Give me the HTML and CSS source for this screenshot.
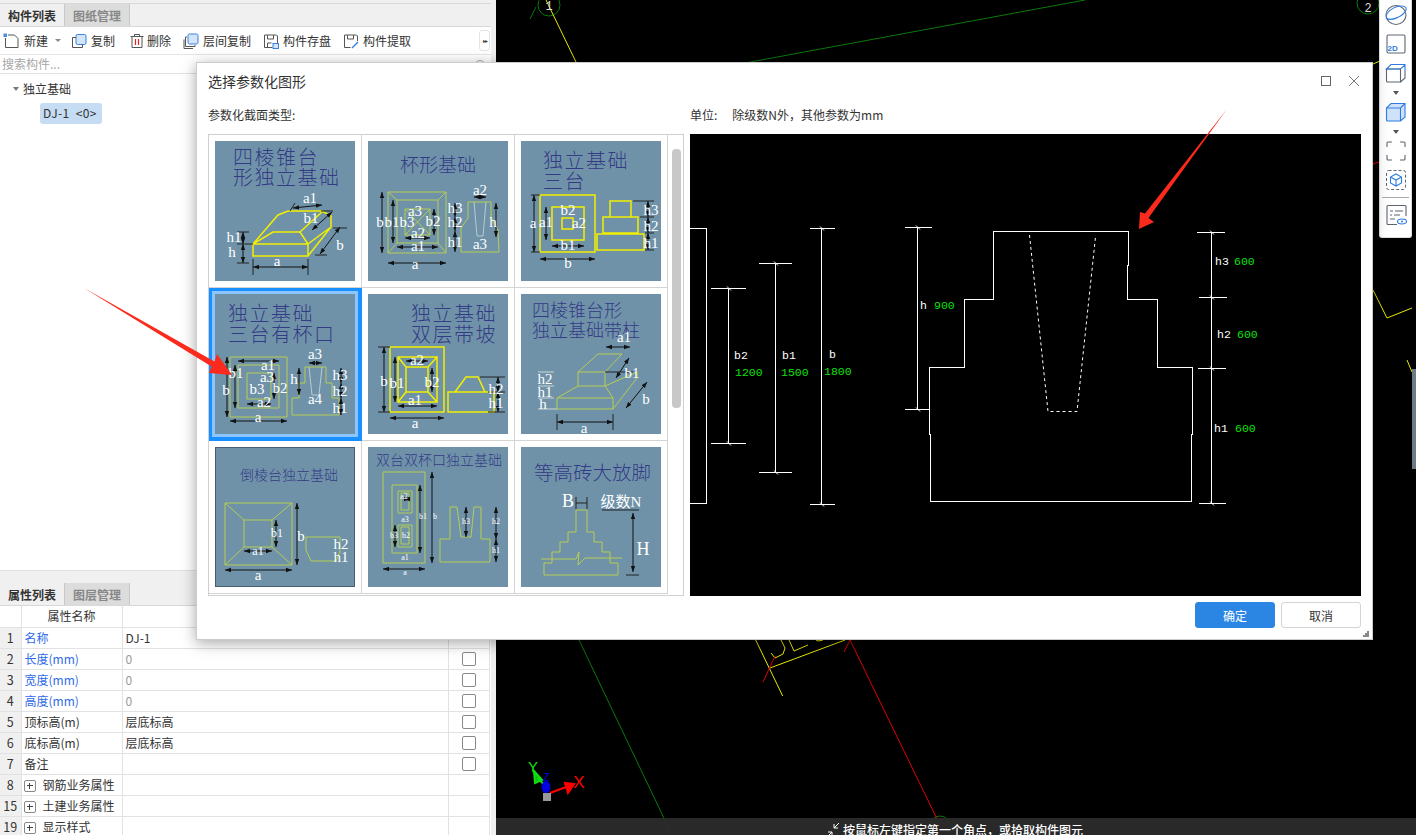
FILE: index.html
```html
<!DOCTYPE html>
<html lang="zh">
<head>
<meta charset="utf-8">
<title>选择参数化图形</title>
<link rel="stylesheet" href="styles.css">
</head>
<body>
<svg class="defs" aria-hidden="true"><defs><marker id="a" viewBox="0 0 6 6" refX="6" refY="3" markerWidth="6" markerHeight="6" markerUnits="userSpaceOnUse" orient="auto-start-reverse"><path d="M0 .8L6 3L0 5.2z" fill="#111"/></marker></defs></svg>
<div class="app">
  <aside class="left">
    <div class="strip"></div>
    <div class="tabs">
      <div class="tab on">构件列表</div>
      <div class="tab">图纸管理</div>
    </div>
    <div class="tools">
      <div class="tool t-new"><svg class="ti" viewBox="0 0 16 16"><path class="ln" d="M2.500 5v9.500h12.500V5.500L11.500 2H5"/><rect class="bl" x="0.500" y="0.500" width="3.500" height="3.500"/></svg><span>新建</span><i class="caret"></i></div>
      <div class="tool t-copy"><svg class="ti" viewBox="0 0 16 16"><rect class="bf" x="5" y="1.500" width="10" height="10" rx="1.500"/><path class="ln" d="M5 4.500H1.500v10h10v-3"/></svg><span>复制</span></div>
      <div class="tool t-del"><svg class="ti" viewBox="0 0 16 16"><path class="ln" d="M1.500 3.500h13M5.500 3.500v-2h5v2M3 3.500v11h10v-11"/><path class="rd" d="M6.500 6v6M9.500 6v6"/></svg><span>删除</span></div>
      <div class="tool"><svg class="ti" viewBox="0 0 16 16"><rect class="bf" x="5" y="1" width="10" height="10" rx="1.500"/><path class="ln" d="M4 4H2.500v9.500H12V12M1 6.500v9h9"/></svg><span>层间复制</span></div>
      <div class="tool"><svg class="ti" viewBox="0 0 16 16"><path class="ln" d="M1.500 2h12l1 1v7M1.500 2v12.500h8M4.500 2v4h6V2M4.500 14v-4h4"/><rect class="bf" x="10" y="10.500" width="5.500" height="5"/></svg><span>构件存盘</span></div>
      <div class="tool"><svg class="ti" viewBox="0 0 16 16"><path class="ln" d="M1.500 2h12l1 1v5M1.500 2v12.500h6M4.500 2v4h6V2"/><path class="bs" d="M9 15l6-6"/></svg><span>构件提取</span></div>
      <div class="more">▸▸</div>
    </div>
    <div class="search">搜索构件...</div>
    <div class="tree">
      <div class="node"><i class="tri"></i>独立基础</div>
      <div class="leaf">DJ-1 &lt;0&gt;</div>
    </div>
    <div class="split"></div>
    <div class="tabs">
      <div class="tab on">属性列表</div>
      <div class="tab">图层管理</div>
    </div>
    <table class="props">
      <colgroup><col class="c1"><col class="c2"><col class="c3"><col class="c4"></colgroup>
      <tr class="hd"><td></td><td class="ctr">属性名称</td><td></td><td></td></tr>
      <tr><td class="n">1</td><td class="blue">名称</td><td>DJ-1</td><td></td></tr>
      <tr><td class="n">2</td><td class="blue">长度(mm)</td><td class="mut">0</td><td><i class="cb"></i></td></tr>
      <tr><td class="n">3</td><td class="blue">宽度(mm)</td><td class="mut">0</td><td><i class="cb"></i></td></tr>
      <tr><td class="n">4</td><td class="blue">高度(mm)</td><td class="mut">0</td><td><i class="cb"></i></td></tr>
      <tr><td class="n">5</td><td>顶标高(m)</td><td>层底标高</td><td><i class="cb"></i></td></tr>
      <tr><td class="n">6</td><td>底标高(m)</td><td>层底标高</td><td><i class="cb"></i></td></tr>
      <tr><td class="n">7</td><td>备注</td><td></td><td><i class="cb"></i></td></tr>
      <tr><td class="n">8</td><td><i class="plus"></i>钢筋业务属性</td><td></td><td></td></tr>
      <tr><td class="n">15</td><td><i class="plus"></i>土建业务属性</td><td></td><td></td></tr>
      <tr><td class="n">19</td><td><i class="plus"></i>显示样式</td><td></td><td></td></tr>
    </table>
  </aside>
  <div class="gutter"></div>
  <main class="canvas">
    <svg class="cad" viewBox="496 0 920 835">
      <g class="cg"><circle cx="549" cy="5" r="11"/><path d="M536 7L530 19"/><circle cx="1368" cy="3" r="11"/><path d="M745 63L1085 0M579 640L672 835"/><circle cx="940" cy="826" r="10"/></g>
      <g class="cy"><path d="M546 0L576 62M1373 64L1380 61M1373 290L1387 318L1412 308M1407 360L1412 372M755.700 640L782.700 696M770 668L845 640M781 640L785 648L783 654L775 658L771 653M789 640L794 651L808 645M816 640L818 641L823 640"/></g>
      <g class="cr"><path d="M775 656L763 682M850 640L940 825M850 640L844 652M1373 164L1379 162"/></g>
      <text class="cn" x="549" y="10">1</text>
      <text class="cn" x="1368" y="12">2</text>
      <g class="axis">
        <path class="ax-y" d="M546 787L538 778M534 771L535 783L542 780z"/>
        <path class="ax-x" d="M550 793L566 787M574 784L565 783L568 793z"/>
        <rect class="ax-o" x="543" y="793" width="8" height="8"/>
        <ellipse class="ax-z" cx="546" cy="787" rx="4.500" ry="6"/>
        <text class="lb-y" x="528" y="772">Y</text>
        <text class="lb-z" x="543" y="781">Z</text>
        <text class="lb-x" x="579" y="788">X</text>
      </g>
    </svg>
    <div class="status"><svg class="si" viewBox="0 0 16 14"><path d="M14 0L9 5M9 1v4h4M2 14l5-5M7 13V9H3"/></svg>按鼠标左键指定第一个角点，或拾取构件图元</div>
    <div class="side">
      <svg class="si22" viewBox="0 0 22 22"><ellipse class="gr" cx="11" cy="11" rx="10" ry="9.500"/><path class="bu" d="M1.500 14C0 9 8 2 17 2c4 0 5 3 3.500 5C18 12 6 18 1.500 14z"/></svg>
      <svg class="si22" viewBox="0 0 22 22"><rect class="gr" x="2" y="2" width="18" height="18" rx="1.500"/><text class="d2" x="2.500" y="18">2D</text></svg>
      <svg class="si22 cube" viewBox="0 0 22 22"><path class="gr" d="M1.500 7v12a1 1 0 0 0 1 1h13V7z"/><path class="gr" d="M15.500 20l4.500-4V9"/><path class="bu" d="M1.500 7L6 2.500h14V3l-4.500 4H1.500zM20 3v6"/></svg>
      <i class="drop"></i>
      <svg class="si22 cube" viewBox="0 0 22 22"><path class="bf2" d="M1.500 7v12a1 1 0 0 0 1 1h13l4.500-4V2.500H6z"/><path class="bu" d="M1.500 7h14l4.500-4.500M15.500 7v13"/></svg>
      <i class="drop"></i>
      <svg class="si22" viewBox="0 0 22 22"><path class="gr" d="M2 7V3a1 1 0 0 1 1-1h4M15 2h4a1 1 0 0 1 1 1v4M20 15v4a1 1 0 0 1-1 1h-4M7 20H3a1 1 0 0 1-1-1v-4"/></svg>
      <svg class="si22 tight" viewBox="0 0 22 22"><rect class="dsh" x="1.500" y="1.500" width="19" height="19" rx="2"/><path class="bu" d="M11 5l5.500 3v6L11 17l-5.500-3V8zM5.500 8l5.500 3 5.500-3M11 11v6"/></svg>
      <div class="rule"></div>
      <svg class="si22" viewBox="0 0 22 22"><path class="gr" d="M12 20.500H3a1 1 0 0 1-1-1V2.500a1 1 0 0 1 1-1h17a1 1 0 0 1 1 1V12"/><path class="gr" d="M5 7h3M10 7h8M5 11h2M9 11h6M5 15h5"/><ellipse class="bu" cx="17" cy="17.500" rx="4.500" ry="2.500"/><circle class="dot" cx="17" cy="17.500" r="1"/></svg>
    </div>
    <div class="handle"></div>
  </main>

  <section class="dialog">
    <header class="dlg-head">
      <span>选择参数化图形</span>
      <div class="win"><i class="max"></i><svg class="x" viewBox="0 0 12 12"><path d="M1 1l10 10M11 1L1 11"/></svg></div>
    </header>
    <div class="labels">
      <div class="lab-l">参数化截面类型:</div>
      <div class="lab-r"><span class="unit">单位:</span>除级数N外，其他参数为mm</div>
    </div>
    <div class="body">
      <div class="frame">
        <div class="grid">
          <div class="cell"><svg class="th" viewBox="0 0 140 140">
            <text class="t t20" x="18" y="24">四棱锥台</text><text class="t t20" x="18" y="44">形独立基础</text>
            <path class="y" d="M38 103h55v12H38zM38 103L63 74L73 70H107L116 75V86L93 115M38 103L58 91H85L93 103M85 91L107 71M93 103L116 86"/>
            <path class="k" d="M38 126H93"/><path class="k" d="M105 113L125 86"/><path class="k" d="M78 67L107 64"/><path class="k" d="M97 89L117 71"/><path class="k" d="M28 91V103"/><path class="k" d="M28 103V122"/>
            <path class="k0" d="M38 118V134M93 118V134M22 91H34M22 103H38M22 122H34M118 87H132M100 114H112M75 70L80 62M106 70H118"/>
            <text class="w" x="62" y="125">a</text><text class="w" x="125" y="109">b</text><text class="w" x="95" y="62">a1</text><text class="w" x="96" y="82">b1</text><text class="w" x="19" y="101">h1</text><text class="w" x="17" y="116">h</text>
          </svg></div>
          <div class="cell"><svg class="th" viewBox="0 0 140 140">
            <text class="t t19" x="32" y="31">杯形基础</text>
            <path class="g" d="M20 51h58v61H20zM29 59h41v43H29zM37 68h25v26H37zM20 51L29 59M78 51L70 59M20 112L29 102M78 112L70 102M37 68L62 94M62 68L37 94"/>
            <path class="g" d="M100 61H123V77L130 89L131 111H93V87L100 77z"/><path class="gl" d="M106 61L109 95H115L118 61"/>
            <path class="k" d="M14 51V112"/><path class="k" d="M25 59V102"/><path class="k" d="M66 68V94"/><path class="k" d="M29 106H70"/><path class="k" d="M20 122H78"/><path class="k" d="M106 56H118"/><path class="k" d="M128 62V96"/><path class="k" d="M87 62V76"/><path class="k" d="M87 76V90"/><path class="k" d="M87 90V111"/><path class="k" d="M37 97H62"/>
            <text class="w" x="12" y="86">b</text><text class="w" x="24" y="86">b1</text><text class="w" x="39" y="86">b3</text><text class="w" x="65" y="85">b2</text><text class="w" x="47" y="75">a3</text><text class="w" x="50" y="97">a2</text><text class="w" x="50" y="110">a1</text><text class="w" x="47" y="128">a</text><text class="w" x="112" y="54">a2</text><text class="w" x="87" y="72">h3</text><text class="w" x="87" y="86">h2</text><text class="w" x="87" y="106">h1</text><text class="w" x="112" y="108">a3</text><text class="w" x="125" y="86">h</text>
          </svg></div>
          <div class="cell"><svg class="th" viewBox="0 0 140 140">
            <text class="t t20" x="22" y="27">独立基础</text><text class="t t20" x="22" y="48">三台</text>
            <path class="y" d="M19 54h55v57H19zM31 66h32v33H31zM41 77h11v11H41zM89 60h21v16H89zM82 76h35v16H82zM76 93h47v16H76z"/>
            <path class="k" d="M13 54V111"/><path class="k" d="M25 66V99"/><path class="k" d="M31 105H63"/><path class="k" d="M19 118H74"/><path class="k" d="M127 60V76"/><path class="k" d="M127 76V92"/><path class="k" d="M127 92V109"/>
            <path class="k0" d="M10 54H19M10 111H19M112 60H133M119 76H133M124 92H133M124 109H133"/>
            <text class="w" x="12" y="87">a</text><text class="w" x="25" y="86">a1</text><text class="w" x="47" y="74">b2</text><text class="w" x="58" y="87">a2</text><text class="w" x="47" y="109">b1</text><text class="w" x="47" y="127">b</text><text class="w" x="130" y="74">h3</text><text class="w" x="130" y="90">h2</text><text class="w" x="130" y="107">h1</text>
          </svg></div>

          <div class="cell sel"><svg class="th" viewBox="0 0 140 140">
            <text class="t t20" x="13" y="27">独立基础</text><text class="t t20" x="13" y="48">三台有杯口</text>
            <path class="g" d="M15 63h57v60H15zM23 71h41v43H23zM32 79h24v26H32z"/>
            <path class="g" d="M90 73H111V89H117V104H124V121H77V104H84V89H90z"/><path class="gl" d="M94 73L97 101H104L107 73"/>
            <path class="k" d="M12 63V123"/><path class="k" d="M20 71V114"/><path class="k" d="M59 79V105"/><path class="k" d="M23 67H64"/><path class="k" d="M32 110H56"/><path class="k" d="M15 127H72"/><path class="k" d="M94 69H107"/><path class="k" d="M84 74V101"/><path class="k" d="M126 74V89"/><path class="k" d="M126 89V104"/><path class="k" d="M126 104V121"/>
            <text class="w" x="53" y="76">a1</text><text class="w" x="52" y="88">a3</text><text class="w" x="21" y="84">b1</text><text class="w" x="11" y="101">b</text><text class="w" x="42" y="100">b3</text><text class="w" x="65" y="99">b2</text><text class="w" x="49" y="113">a2</text><text class="w" x="43" y="128">a</text><text class="w" x="100" y="65">a3</text><text class="w" x="79" y="90">h</text><text class="w" x="125" y="86">h3</text><text class="w" x="125" y="102">h2</text><text class="w" x="125" y="119">h1</text><text class="w" x="100" y="110">a4</text>
          </svg></div>
          <div class="cell"><svg class="th" viewBox="0 0 140 140">
            <text class="t t20" x="43" y="27">独立基础</text><text class="t t20" x="43" y="48">双层带坡</text>
            <path class="y" d="M22 53h54v65H22zM30 63h39v45H30zM38 73h22v25H38zM30 63L38 73M69 63L60 73M30 108L38 98M69 108L60 98M80 98h46v20H80zM87 98L98 83H110L117 98"/>
            <path class="k" d="M16 53V118"/><path class="k" d="M27 63V108"/><path class="k" d="M64 74V98"/><path class="k" d="M38 67H60"/><path class="k" d="M30 112H69"/><path class="k" d="M22 124H76"/><path class="k" d="M130 83V98"/><path class="k" d="M130 98V118"/>
            <path class="k0" d="M112 83H137M120 98H137M120 118H137M10 53H22M10 118H22"/>
            <text class="w" x="16" y="92">b</text><text class="w" x="29" y="94">b1</text><text class="w" x="49" y="71">a2</text><text class="w" x="64" y="93">b2</text><text class="w" x="47" y="111">a1</text><text class="w" x="47" y="134">a</text><text class="w" x="128" y="100">h2</text><text class="w" x="128" y="114">h1</text>
          </svg></div>
          <div class="cell"><svg class="th" viewBox="0 0 140 140">
            <text class="t t18" x="11" y="23">四棱锥台形</text><text class="t t18" x="11" y="43">独立基础带柱</text>
            <path class="g" d="M36 104h56v11H36zM57 78h27v14H57zM36 104L57 92M92 104L84 92M57 78L77 60H101L84 78M84 92L116 78V84L92 115"/>
            <path class="k" d="M36 128H92"/><path class="k" d="M105 114L126 88"/><path class="k" d="M85 53H109"/><path class="k" d="M95 84L108 64"/>
            <path class="k0" d="M36 120V136M92 120V136M84 78H112"/>
            <path class="lt" d="M17 115H36M17 104H33M17 92H33M17 78H33"/>
            <text class="w" x="103" y="48">a1</text><text class="w" x="111" y="84">b1</text><text class="w" x="125" y="110">b</text><text class="w" x="24" y="90">h2</text><text class="w" x="24" y="103">h1</text><text class="w" x="22" y="115">h</text><text class="w" x="63" y="139">a</text>
          </svg></div>

          <div class="cell"><svg class="th dk" viewBox="0 0 140 140">
            <text class="t t14" x="25" y="33">倒棱台独立基础</text>
            <path class="g" d="M10 56h67v62H10zM29 73h28v27H29zM10 56L29 73M77 56L57 73M10 118L29 100M77 118L57 100M91 90H125V105L121 114H96L91 103z"/>
            <path class="k" d="M10 123H77"/><path class="k" d="M82 56V118"/><path class="k" d="M61 73V100"/><path class="k" d="M29 104H57"/>
            <text class="w" x="43" y="133">a</text><text class="w" x="86" y="94">b</text><text class="w s12" x="62" y="90">b1</text><text class="w s12" x="43" y="108">a1</text><text class="w" x="126" y="102">h2</text><text class="w" x="126" y="115">h1</text>
          </svg></div>
          <div class="cell"><svg class="th" viewBox="0 0 140 140">
            <text class="t t14" x="8" y="18">双台双杯口独立基础</text>
            <path class="g" d="M15 25h42v91H15zM24 38h25v68H24zM30 44h14v22H30zM33 46h8v17H33zM30 78h14v22H30zM33 80h8v17H33z"/>
            <path class="g" d="M72 115V92H82V60H89L93 90H103L106 60H113V92H122V115z"/>
            <path class="k" d="M64 25V116"/><path class="k" d="M52 38V106"/><path class="k" d="M27 78V100"/><path class="k" d="M36 52H42"/><path class="k" d="M15 122H57"/><path class="k" d="M98 60V90"/><path class="k" d="M128 60V92"/><path class="k" d="M128 92V115"/>
            <text class="w s8" x="36" y="52">a2</text><text class="w s8" x="37" y="75">a3</text><text class="w s8" x="55" y="72">b1</text><text class="w s8" x="67" y="72">b</text><text class="w s8" x="26" y="91">b3</text><text class="w s8" x="38" y="91">b2</text><text class="w s8" x="37" y="113">a1</text><text class="w s8" x="37" y="128">a</text><text class="w s8" x="98" y="77">h3</text><text class="w s8" x="128" y="77">h2</text><text class="w s8" x="128" y="106">h1</text>
          </svg></div>
          <div class="cell"><svg class="th" viewBox="0 0 140 140">
            <text class="t t19b" x="13" y="33">等高砖大放脚</text>
            <path class="g" d="M23 128H97V116H89V105H81V95H73V85H66V63H55V85H47V95H39V105H31V116H23z"/>
            <path class="g" d="M20 112H55L58 105L57 118L64 111H101"/>
            <path class="k" d="M112 66V125"/><path class="k0" d="M81 63H118M105 128H118M55 50V62M66 50V62M55 56H66"/>
            <text class="w w18" x="47" y="60">B</text><text class="w w16" x="100" y="60">级数N</text><text class="w w18" x="122" y="108">H</text>
          </svg></div>
        </div>
        <div class="track"><div class="thumb"></div></div>
      </div>
      <svg class="preview" viewBox="690 134 671 462">
        <path class="p" d="M690 228.500H706.500V503.500H690"/>
        <path class="p" d="M711 288.500H746M728.500 288.500V443M711 443.500H746M759 263.500H792M775.500 263.500V472M759 472.500H792M810 228.500H835M821.500 228.500V504M810 504.500H835M905 227.500H932M917.500 227.500V409.500M905 409.500H930"/>
        <path class="p" d="M929.500 409V367.500H964.500V299.500H993.500V231.500H1128.500V265H1127.500V299.500H1157.500V367.500H1192.500V434H1191.500V501.500H930.500V434.500H929.500V409"/>
        <path class="pd" d="M1029.500 235L1048 411.500H1077L1095.700 235"/>
        <path class="p" d="M1211.500 232V503M1197 232.500H1225M1199 297.500H1227M1198 368.500H1226M1199 503.500H1226"/>
        <path class="pt" d="M727 286.500l4 4M727 441.500l4 4M774 261.500l4 4M774 470.500l4 4M820 226.500l4 4M820 502.500l4 4M916 225.500l4 4M916 407.500l4 4M1210 230.500l4 4M1210 295.500l4 4M1210 366.500l4 4M1210 501.500l4 4"/>
        <text class="lw" x="734" y="359">b2</text><text class="lg" x="735" y="376">1200</text>
        <text class="lw" x="782" y="359">b1</text><text class="lg" x="781" y="376">1500</text>
        <text class="lw" x="829" y="358">b</text><text class="lg" x="824" y="375">1800</text>
        <text class="lw" x="920" y="309">h</text><text class="lg" x="934" y="309">900</text>
        <text class="lw" x="1215" y="265">h3</text><text class="lg" x="1234" y="265">600</text>
        <text class="lw" x="1217" y="338">h2</text><text class="lg" x="1237" y="338">600</text>
        <text class="lw" x="1214" y="432">h1</text><text class="lg" x="1235" y="432">600</text>
      </svg>
    </div>
    <footer class="foot">
      <button class="btn pri">确定</button>
      <button class="btn">取消</button>
      <svg class="grip" viewBox="0 0 6 6"><path d="M4 0h2v2H4zM2 2h2v2H2zM4 2h2v2H4zM0 4h2v2H0zM2 4h2v2H2zM4 4h2v2H4z"/></svg>
    </footer>
  </section>

  <svg class="marks" viewBox="0 0 1416 835">
    <path d="M84 288L214.500 361.400L217 354L232 375L209 373L211.500 366.600z"/>
    <path d="M1227 109L1145 213.500L1140 212L1139 229L1154 222L1148.500 218z"/>
  </svg>
</div>
</body>
</html>
```
FILE: styles.css
```css
* { box-sizing: border-box; }
html, body { margin: 0; padding: 0; }
body { font-family: "Noto Sans CJK SC", "Liberation Sans", sans-serif; font-size: 12px; color: #333; background: #000; }
.defs { position: absolute; width: 0; height: 0; }
.app { position: relative; display: flex; width: 1416px; height: 835px; overflow: hidden; }

.left { width: 491px; height: 835px; flex: none; display: flex; flex-direction: column; background: #fff; overflow: hidden; }
.strip { height: 4px; background: #f0f0f0; border-bottom: 1px solid #d8d8d8; flex: none; }
.tabs { display: flex; height: 23px; flex: none; background: #f0f0f0; border-bottom: 1px solid #d8d8d8; }
.tab { width: 65px; display: flex; align-items: center; justify-content: center; background: #dcdcdc; color: #888; font-size: 12px; font-weight: 700; border-right: 1px solid #c8c8c8; }
.tab.on { background: #f0f0f0; color: #333; }
.tools { height: 28px; flex: none; display: flex; align-items: center; padding-left: 3px; border-bottom: 1px solid #e4e4e4; position: relative; }
.tool { display: flex; align-items: center; gap: 4px; margin-right: 12px; line-height: 16px; }
.t-new { margin-right: 10px; gap: 5px; }
.t-copy { margin-right: 14px; }
.t-del { gap: 2px; }
.ti { width: 16px; height: 16px; flex: none; }
.ln { fill: none; stroke: #555; stroke-width: 1; }
.bl { fill: #4a90d9; }
.bf { fill: #d4e4fa; stroke: #3b82dc; stroke-width: 1; }
.bs { fill: none; stroke: #3b82dc; stroke-width: 1.500; }
.rd { fill: none; stroke: #e02020; stroke-width: 1.200; }
.caret { width: 0; height: 0; margin-left: 2px; border: 3px solid transparent; border-top: 3px solid #888; border-bottom: 0; }
.more { position: absolute; left: 479px; top: 3px; width: 11px; height: 21px; border: 1px solid #e4e4e4; border-radius: 3px; font-size: 6px; line-height: 19px; text-align: center; color: #444; letter-spacing: -1px; }
.search { position: relative; height: 19px; flex: none; padding-left: 2px; line-height: 18px; color: #a8a8a8; border-bottom: 1px solid #e2e2e2; }
.search::after { content: ""; position: absolute; left: 474px; top: 5px; width: 10px; height: 10px; border: 1px solid #aaa; border-radius: 50%; }
.tree { height: 496px; flex: none; padding-top: 6px; }
.node { height: 18px; line-height: 18px; padding-left: 23px; position: relative; }
.tri { position: absolute; left: 13px; top: 7px; width: 0; height: 0; border: 3.500px solid transparent; border-top: 4px solid #777; border-bottom: 0; }
.leaf { margin: 5px 0 0 40px; width: 62px; height: 21px; line-height: 20px; padding-left: 3px; background: #c5dcf2; border-radius: 3px; font-size: 12px; white-space: nowrap; letter-spacing: .4px; word-spacing: 3px; }
.split { height: 13px; flex: none; background: #f0f0f0; border-top: 1px solid #e0e0e0; }
.props { border-collapse: collapse; table-layout: fixed; width: 489px; flex: none; }
.c1 { width: 21px; } .c2 { width: 101px; } .c3 { width: 326px; } .c4 { width: 41px; }
.props td { height: 21px; padding: 0 3px; border: 1px solid #e2e2e2; line-height: 18px; white-space: nowrap; overflow: hidden; }
.props td:first-child { border-left: 0; }
.props tr:first-child td { border-top: 0; }
.props .n { background: #f0f0f0; text-align: center; padding: 0; font-size: 12.500px; }
.props .ctr { text-align: center; }
.hd td:first-child { background: #fff; }
.blue { color: #2f6bea; }
.mut { color: #999; }
.cb { display: block; width: 14px; height: 14px; margin-left: 10px; border: 1px solid #888; border-radius: 2px; }
.plus { display: inline-block; position: relative; width: 12px; height: 12px; margin: 0 7px 0 -1px; vertical-align: -2px; border: 1px solid #888; border-radius: 2px; }
.plus::before { content: ""; position: absolute; left: 2px; top: 4.500px; width: 6px; height: 1px; background: #444; }
.plus::after { content: ""; position: absolute; left: 4.500px; top: 2px; width: 1px; height: 6px; background: #444; }

.gutter { width: 5px; flex: none; background: #f0f0f0; }
.canvas { flex: 1; position: relative; background: #000; overflow: hidden; }
.cad { display: block; width: 920px; height: 835px; }
.cg path, .cg circle { fill: none; stroke: #0a7a0a; stroke-width: 1; }
.cy path { fill: none; stroke: #e8e800; stroke-width: 1; }
.cr path { fill: none; stroke: #e00000; stroke-width: 1; }
.cn { fill: #ddd; font: 12px "Liberation Mono", monospace; text-anchor: middle; }
.ax-y { fill: #10c010; stroke: #10e010; stroke-width: 2; }
.ax-x { fill: #f00; stroke: #f00; stroke-width: 2; }
.ax-o { fill: #999; }
.ax-z { fill: #0000e0; }
.lb-y, .lb-z, .lb-x { font: 17px "Liberation Sans", sans-serif; }
.lb-y { fill: #10e010; font-size: 15px; } .lb-z { fill: #0000e0; font-size: 11px; } .lb-x { fill: #f00; text-anchor: middle; }
.status { position: absolute; left: 0; right: 0; bottom: 0; height: 17px; background: rgba(44, 44, 44, .93); color: #fff; padding-left: 347px; line-height: 24px; font-size: 12px; font-weight: 500; white-space: nowrap; overflow: hidden; }
.si { width: 16px; height: 14px; position: absolute; left: 329px; top: 5px; }
.si path { fill: none; stroke: #fff; stroke-width: 1; }
.side { position: absolute; left: 883px; top: 0; width: 33px; height: 238px; background: #fff; border: 1px solid #ddd; border-top: 0; border-radius: 0 0 3px 3px; display: flex; flex-direction: column; align-items: center; padding-top: 4px; box-shadow: 0 0 3px rgba(0,0,0,.2); }
.si22 { width: 22px; height: 22px; display: block; flex: none; margin-bottom: 7px; }
.si22.cube { margin-bottom: 0; }
.si22.tight { margin-bottom: 6px; }
.gr { fill: none; stroke: #5d6472; stroke-width: 1.100; }
.bu { fill: none; stroke: #2f7de1; stroke-width: 1.100; }
.bf2 { fill: #cfe2fa; stroke: #2f7de1; stroke-width: 1.100; }
.dot { fill: #2f7de1; }
.dsh { fill: none; stroke: #5d6472; stroke-width: 1; stroke-dasharray: 3 2; }
.d2 { fill: #2f7de1; font: 700 8px "Liberation Sans", sans-serif; }
.drop { width: 0; height: 0; margin: 7px 0 6px; border: 3.500px solid transparent; border-top: 4px solid #555; border-bottom: 0; flex: none; }
.rule { width: 27px; height: 1px; background: #aaa; margin: 0 0 6px; flex: none; }
.handle { position: absolute; right: 0; top: 369px; width: 4px; height: 100px; background: #6e7a85; }

.dialog { position: absolute; left: 196px; top: 62px; width: 1177px; height: 578px; background: #fff; border: 1px solid #ccc; box-shadow: 0 3px 14px rgba(0,0,0,.35); display: flex; flex-direction: column; }
.dlg-head { height: 35px; flex: none; display: flex; align-items: center; justify-content: space-between; padding: 0 12px 0 11px; font-size: 14px; }
.win { display: flex; align-items: center; gap: 17px; }
.max { width: 10px; height: 10px; border: 1px solid #666; }
.x { width: 12px; height: 12px; }
.x path { fill: none; stroke: #777; stroke-width: 1; }
.labels { height: 36px; flex: none; display: flex; padding-top: 9px; font-size: 12px; line-height: 16px; }
.lab-l { width: 493px; padding-left: 11px; }
.unit { margin-right: 15px; }
.body { height: 462px; flex: none; display: flex; padding-left: 11px; gap: 6px; }
.frame { width: 476px; height: 462px; flex: none; display: flex; border: 1px solid #d0d0d0; overflow: hidden; }
.grid { width: 459px; flex: none; display: grid; grid-template-columns: repeat(3, 153px); grid-auto-rows: 153px; }
.cell { border-right: 1px solid #d4d4d4; border-bottom: 1px solid #d4d4d4; padding: 6px; }
.cell.sel { border-color: #1890ff; box-shadow: inset 0 0 0 3px #1890ff, inset 0 0 0 6px #8cc4ff; }
.th { display: block; width: 140px; height: 140px; background: #6f92a9; }
.th.dk { outline: 1px solid #465e70; outline-offset: -1px; }
.t { fill: #2c2f80; fill-opacity: .9; font-family: "Noto Sans CJK SC", sans-serif; font-weight: 300; }
.t20 { font-size: 20px; letter-spacing: 1.500px; }
.t19 { font-size: 19px; }
.t19b { font-size: 19.500px; }
.t18 { font-size: 18px; }
.t14 { font-size: 14px; }
.w { fill: #fff; font-family: "Liberation Serif", serif; font-size: 15px; text-anchor: middle; }
.s12 { font-size: 12px; }
.s8 { font-size: 8px; }
.w16 { font-size: 15px; font-family: "Liberation Serif", "Noto Sans CJK SC", serif; }
.w18 { font-size: 18px; }
.y { fill: none; stroke: #f2f000; stroke-width: 1.500; }
.g { fill: none; stroke: #b6cc52; stroke-width: 1; }
.gl { fill: none; stroke: #b8ccd0; stroke-width: 1; }
.lt { fill: none; stroke: #e4e8e0; stroke-width: .8; }
.k { fill: none; stroke: #111; stroke-width: 1; marker-start: url(#a); marker-end: url(#a); }
.k0 { fill: none; stroke: #222; stroke-width: 1; }
.track { flex: 1; background: #fff; padding: 14px 0 0 4px; }
.thumb { width: 9px; height: 259px; background: #c8c8c8; border-radius: 4px; }
.preview { display: block; width: 671px; height: 462px; flex: none; background: #000; }
.p { fill: none; stroke: #fff; stroke-width: 1; shape-rendering: crispEdges; }
.pt { fill: none; stroke: #fff; stroke-width: 1; }
.pd { fill: none; stroke: #fff; stroke-width: 1; stroke-dasharray: 3 3; }
.lw, .lg { font-family: "Liberation Mono", monospace; font-size: 11.500px; }
.lw { fill: #fff; }
.lg { fill: #10e010; }
.foot { flex: 1; display: flex; align-items: flex-start; justify-content: flex-end; gap: 6px; padding: 6px 11px 0 0; position: relative; }
.btn { width: 80px; height: 26px; padding: 0; border: 1px solid #d4d4d4; border-radius: 3px; background: #fff; color: #333; font: 12px "Noto Sans CJK SC", sans-serif; }
.btn.pri { background: #2b86e3; border-color: #2b86e3; color: #fff; }
.grip { position: absolute; right: 3px; bottom: 2px; width: 6px; height: 6px; }
.grip path { fill: #888; }
.marks { position: absolute; left: 0; top: 0; width: 1416px; height: 835px; pointer-events: none; }
.marks path { fill: #fb2a1c; }
```
